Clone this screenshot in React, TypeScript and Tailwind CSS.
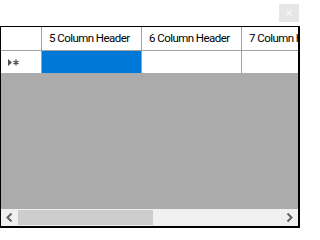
import React from "react";

const Cell = ({ children, className = "" }: { children?: React.ReactNode; className?: string }) => (
  <div className={`shrink-0 h-full flex items-center border-r border-[#a0a0a0] whitespace-nowrap ${className}`}>{children}</div>
);

export default function App() {
  return (
    <div
      className="w-[301px] h-[228px] bg-white flex flex-col overflow-hidden"
      style={{ fontFamily: 'Roboto, "Noto Sans", sans-serif' }}
    >
      <div className="h-[26px] flex justify-end items-start pt-[4px] pr-[2px]">
        <div className="w-[20px] h-[18px] bg-[#e6e6e6] flex items-center justify-center">
          <svg width="6" height="6" viewBox="0 0 6 6">
            <path d="M0.5 0.5 L5.5 5.5 M5.5 0.5 L0.5 5.5" stroke="#f6f6f6" strokeWidth="1.2" />
          </svg>
        </div>
      </div>
      <div className="w-[300px] h-[202px] border-l border-t border-r-2 border-b-2 border-black flex flex-col overflow-hidden">
        <div className="h-[24px] shrink-0 flex border-b border-[#a0a0a0] bg-white text-[11.5px] tracking-[-0.55px] text-black leading-none overflow-hidden">
          <Cell className="w-[41px]" />
          <Cell className="w-[100px] pl-[7px] pt-[1px]">5 Column Header</Cell>
          <Cell className="w-[100px] pl-[7px] pt-[1px]">6 Column Header</Cell>
          <Cell className="w-[100px] pl-[7px] pt-[1px]">7 Column Header</Cell>
        </div>
        <div className="h-[22px] shrink-0 flex bg-white overflow-hidden">
          <Cell className="w-[41px] pl-[7px]">
            <svg width="12" height="7" viewBox="0 0 12 7">
              <path d="M0 0 L4 3.5 L0 7 Z" fill="#505050" />
              <path d="M8 0.5 V6.5 M5.4 2 L10.6 5 M5.4 5 L10.6 2" stroke="#505050" strokeWidth="1.3" />
            </svg>
          </Cell>
          <Cell className="w-[100px] bg-[#0078d7]" />
          <Cell className="w-[100px]" />
          <Cell className="w-[100px]" />
        </div>
        <div className="flex-1 bg-[#ababab]" />
        <div className="h-[17px] shrink-0 bg-[#f0f0f0] flex items-center">
          <div className="w-[17px] h-full flex items-center justify-center">
            <svg width="7" height="9" viewBox="0 0 7 9">
              <path d="M5.5 0.5 L1.5 4.5 L5.5 8.5" stroke="#606060" strokeWidth="2" fill="none" />
            </svg>
          </div>
          <div className="w-[135px] h-[15px] bg-[#cdcdcd]" />
          <div className="flex-1" />
          <div className="w-[17px] h-full flex items-center justify-center">
            <svg width="7" height="9" viewBox="0 0 7 9">
              <path d="M1.5 0.5 L5.5 4.5 L1.5 8.5" stroke="#606060" strokeWidth="2" fill="none" />
            </svg>
          </div>
        </div>
      </div>
    </div>
  );
}
